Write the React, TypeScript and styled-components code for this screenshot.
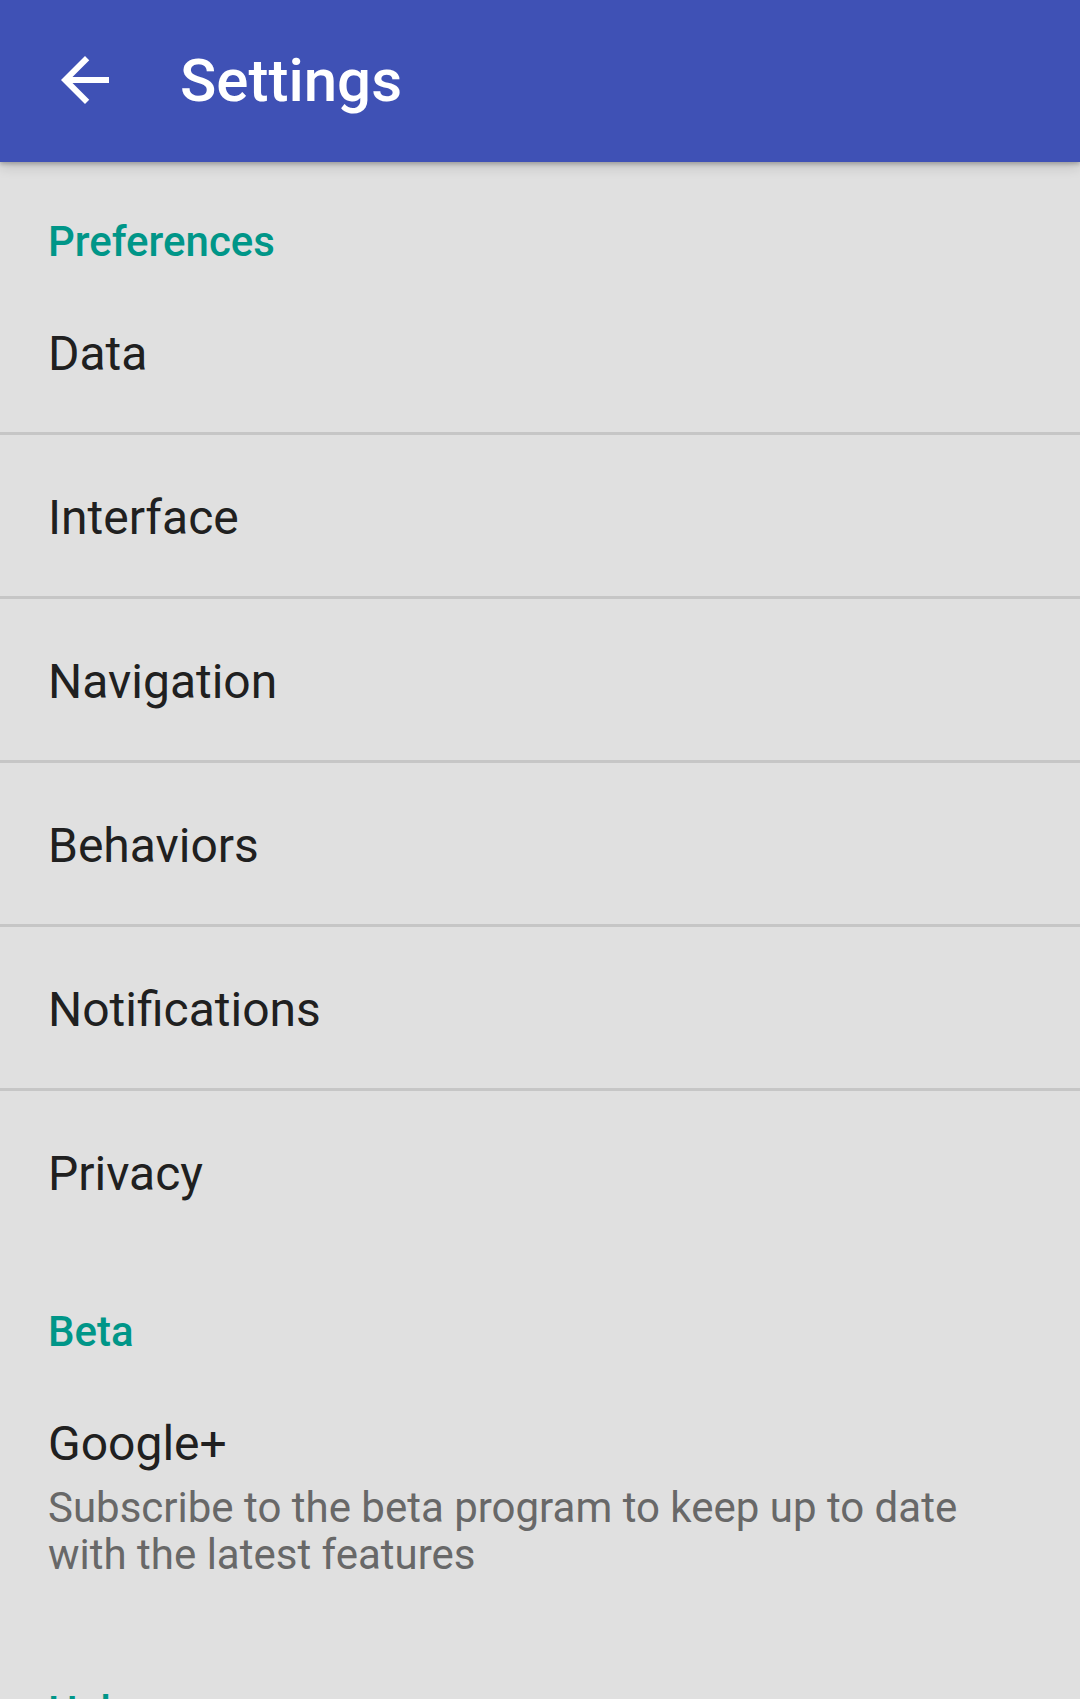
import React from "react";
import styled, { createGlobalStyle } from "styled-components";

const GlobalStyle = createGlobalStyle`
  html, body {
    margin: 0;
    padding: 0;
    background: #e0e0e0;
    font-family: Roboto, "Noto Sans", "Liberation Sans", sans-serif;
  }
  * { box-sizing: border-box; }
`;

const Page = styled.div`
  min-height: 1699px;
  background: #e0e0e0;
  overflow: hidden;
`;

const AppBar = styled.header`
  position: relative;
  z-index: 2;
  height: 162px;
  background: #3f51b5;
  display: flex;
  align-items: center;
  padding-left: 49px;
  box-shadow: 0 2px 4px rgba(0, 0, 0, 0.22), 0 5px 12px rgba(0, 0, 0, 0.14);
`;

const BackButton = styled.button`
  width: 72px;
  height: 72px;
  padding: 0;
  margin: -3px 0 0 0;
  border: none;
  background: transparent;
  display: flex;
  align-items: center;
  justify-content: center;
  cursor: pointer;
  svg {
    width: 72px;
    height: 72px;
    display: block;
  }
`;

const Title = styled.h1`
  margin: 0 0 0 59px;
  font-size: 60px;
  font-weight: 500;
  line-height: 60px;
  color: #ffffff;
  letter-spacing: 0;
`;

const Category = styled.div`
  height: 109px;
  padding: 59px 48px 0 48px;
  font-size: 42px;
  line-height: 42px;
  font-weight: 500;
  color: #009688;
`;

const Row = styled.div<{ $divider?: boolean }>`
  min-height: ${(p) => (p.$divider ? 164 : 161)}px;
  padding: 59px 48px 54px 48px;
  border-bottom: ${(p) => (p.$divider ? "3px solid #c6c6c6" : "none")};
  display: flex;
  flex-direction: column;
`;

const RowTitle = styled.div`
  font-size: 48px;
  line-height: 48px;
  color: #202020;
`;

const RowSummary = styled.div`
  margin-top: 16px;
  font-size: 42px;
  line-height: 47px;
  color: #686868;
`;

const ArrowBack = () => (
  <svg viewBox="0 0 24 24" aria-hidden="true">
    <path
      fill="#ffffff"
      d="M20 11H7.83l5.59-5.59L12 4l-8 8 8 8 1.41-1.41L7.83 13H20v-2z"
    />
  </svg>
);

const preferences = [
  "Data",
  "Interface",
  "Navigation",
  "Behaviors",
  "Notifications",
  "Privacy",
];

export default function App() {
  return (
    <Page>
      <GlobalStyle />
      <AppBar>
        <BackButton aria-label="Back">
          <ArrowBack />
        </BackButton>
        <Title>Settings</Title>
      </AppBar>

      <Category>Preferences</Category>
      {preferences.map((item, i) => (
        <Row key={item} $divider={i < preferences.length - 1}>
          <RowTitle>{item}</RowTitle>
        </Row>
      ))}

      <Category>Beta</Category>
      <Row>
        <RowTitle>Google+</RowTitle>
        <RowSummary>
          Subscribe to the beta program to keep up to date with the latest
          features
        </RowSummary>
      </Row>

      <Category>Help</Category>
    </Page>
  );
}
